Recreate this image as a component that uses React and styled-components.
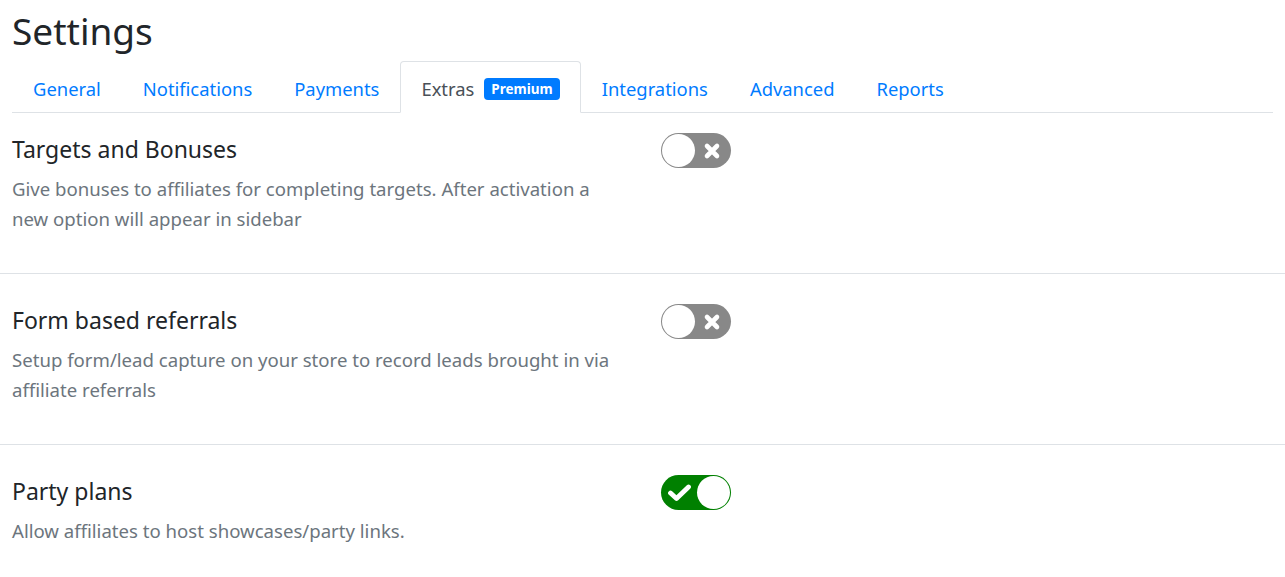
import React from 'react';
import styled, { createGlobalStyle } from 'styled-components';

const Global = createGlobalStyle`
  body {
    margin: 0;
    background: #fff;
    font-family: "Noto Sans", "Open Sans", sans-serif;
    color: #212529;
  }
`;

const Header = styled.div`
  padding: 0 12px;
`;

const Title = styled.h1`
  font-size: 37px;
  font-weight: 400;
  line-height: 48px;
  margin: 7px 0 6px;
`;

const Nav = styled.div`
  display: flex;
  border-bottom: 1px solid #dee2e6;
`;

const Tab = styled.div`
  display: flex;
  align-items: center;
  gap: 10px;
  padding: 13px 20px 10px;
  font-size: 18.4px;
  line-height: 27px;
  margin-bottom: -1px;
  border: 1px solid transparent;
  border-radius: 4px 4px 0 0;
  color: ${p => (p.$active ? '#495057' : '#007bff')};
  ${p => p.$active && `
    background: #fff;
    border-color: #dee2e6 #dee2e6 #fff;
  `}
`;

const Badge = styled.span`
  background: #007bff;
  color: #fff;
  font-size: 13.5px;
  font-weight: 700;
  line-height: 22px;
  padding: 0 7px;
  border-radius: 4px;
`;

const Section = styled.div`
  display: grid;
  grid-template-columns: 612px 1fr;
  column-gap: 37px;
  padding: 32px 12px 39px;
  border-bottom: 1px solid #dee2e6;
  &:first-child {
    padding-top: 22px;
  }
  &:last-child {
    border-bottom: none;
  }
`;

const Name = styled.div`
  font-size: 23px;
  line-height: 29px;
  margin-bottom: 10px;
`;

const Desc = styled.div`
  font-size: 18.6px;
  line-height: 30px;
  color: #6c757d;
`;

const Switch = styled.div`
  position: relative;
  width: 70px;
  height: 35px;
  margin-top: -2px;
  border-radius: 18px;
  background: ${p => (p.$on ? '#008000' : '#888888')};
  display: flex;
  align-items: center;
  justify-content: ${p => (p.$on ? 'flex-start' : 'flex-end')};
  padding: ${p => (p.$on ? '0 0 0 6px' : '0 10px 0 0')};
  box-sizing: border-box;
`;

const Knob = styled.div`
  position: absolute;
  top: 1px;
  ${p => (p.$on ? 'right: 1px;' : 'left: 1px;')}
  width: 33px;
  height: 33px;
  border-radius: 50%;
  background: #fff;
`;

const Cross = () => (
  <svg width="18" height="18" viewBox="0 0 18 18">
    <path d="M4 4 L14 14 M14 4 L4 14" stroke="#fff" strokeWidth="4.6" strokeLinecap="round" />
  </svg>
);

const Check = () => (
  <svg width="26" height="18" viewBox="0 0 26 18">
    <path d="M3.5 9 L9.5 14.5 L21.5 3" stroke="#fff" strokeWidth="4.8" strokeLinecap="round" strokeLinejoin="round" fill="none" />
  </svg>
);

const Toggle = ({ on }) => (
  <Switch $on={on}>
    {on ? <Check /> : <Cross />}
    <Knob $on={on} />
  </Switch>
);

const tabs = ['General', 'Notifications', 'Payments', 'Extras', 'Integrations', 'Advanced', 'Reports'];

const options = [
  {
    name: 'Targets and Bonuses',
    desc: 'Give bonuses to affiliates for completing targets. After activation a new option will appear in sidebar',
    on: false,
  },
  {
    name: 'Form based referrals',
    desc: 'Setup form/lead capture on your store to record leads brought in via affiliate referrals',
    on: false,
  },
  {
    name: 'Party plans',
    desc: 'Allow affiliates to host showcases/party links.',
    on: true,
  },
];

export default function App() {
  return (
    <>
      <Global />
      <Header>
        <Title>Settings</Title>
        <Nav>
          {tabs.map(t => (
            <Tab key={t} $active={t === 'Extras'}>
              {t}
              {t === 'Extras' && <Badge>Premium</Badge>}
            </Tab>
          ))}
        </Nav>
      </Header>
      <div>
        {options.map(o => (
          <Section key={o.name}>
            <div>
              <Name>{o.name}</Name>
              <Desc>{o.desc}</Desc>
            </div>
            <div>
              <Toggle on={o.on} />
            </div>
          </Section>
        ))}
      </div>
    </>
  );
}
